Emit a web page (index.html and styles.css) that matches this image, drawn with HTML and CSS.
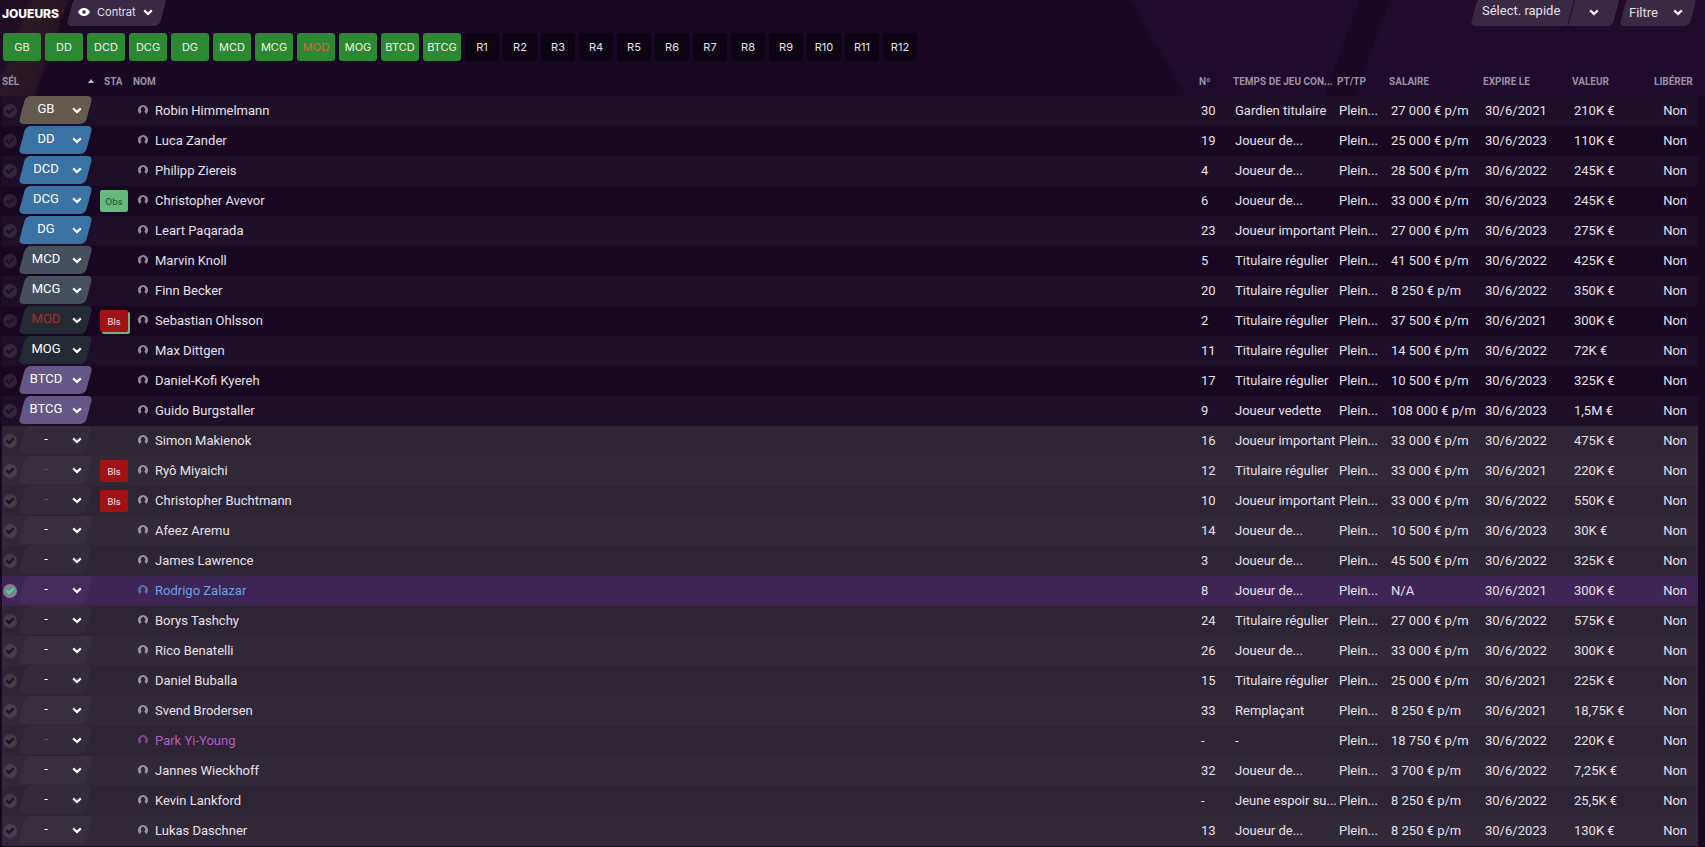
FILE: index.html
```html
<!DOCTYPE html>
<html lang="fr">
<head>
    <meta charset="UTF-8">
    <meta name="viewport" content="width=device-width, initial-scale=1.0">
    <title>Joueurs</title>
    <link rel="stylesheet" href="styles.css">
</head>
<body>
    <svg class="symbols" aria-hidden="true">
        <symbol id="chevron" viewBox="0 0 10 7">
            <path d="M1.2 1.4 L5 5 L8.8 1.4" fill="none" stroke="currentColor" stroke-width="2.2"/>
        </symbol>
        <symbol id="person" viewBox="0 0 10 10">
            <path fill="currentColor" d="M5 0a5 5 0 0 1 3.900 8.100L8 9.500C7.900 8 7.200 7 6.200 6.500a2.200 2.400 0 1 0-2.400 0C2.800 7 2.100 8 2 9.500L1.100 8.100A5 5 0 0 1 5 0z"/>
        </symbol>
    </svg>

    <header class="toolbar">
        <h1>Joueurs</h1>
        <button class="tab view">
            <svg class="eye" viewBox="0 0 12 8"><path fill="currentColor" fill-rule="evenodd" d="M6 0C9 0 11 2 12 4 11 6 9 8 6 8S1 6 0 4C1 2 3 0 6 0zM6 2.200a1.800 1.800 0 1 0 0 3.600 1.800 1.800 0 0 0 0-3.600z"/></svg>
            Contrat
            <svg class="chevron"><use href="#chevron"/></svg>
        </button>
        <div class="actions">
            <button class="tab quick">Sélect. rapide</button>
            <button class="tab more" aria-label="Options"><svg class="chevron"><use href="#chevron"/></svg></button>
            <button class="tab filter">Filtre <svg class="chevron"><use href="#chevron"/></svg></button>
        </div>
    </header>

    <nav class="chips" id="chips"></nav>

    <table class="players">
        <colgroup>
            <col class="c-sel"><col class="c-pos"><col class="c-sta"><col class="c-name">
            <col class="c-num"><col class="c-time"><col class="c-pt"><col class="c-wage">
            <col class="c-end"><col class="c-value"><col class="c-release">
        </colgroup>
        <thead>
            <tr>
                <th colspan="2"><span class="sort">SÉL</span></th>
                <th class="h-sta">STA</th>
                <th class="h-name">NOM</th>
                <th>Nº</th>
                <th>TEMPS DE JEU CON...</th>
                <th>PT/TP</th>
                <th>SALAIRE</th>
                <th>EXPIRE LE</th>
                <th>VALEUR</th>
                <th>LIBÉRER</th>
            </tr>
        </thead>
        <tbody id="players"></tbody>
    </table>

    <script>
        const positions = ["GB", "DD", "DCD", "DCG", "DG", "MCD", "MCG", "MOD", "MOG", "BTCD", "BTCG"];

        // position, status, name, number, playing time, wage, expiry year, value, extra class
        const players = [
            ["GB", "", "Robin Himmelmann", "30", "Gardien titulaire", "27 000 € p/m", 2021, "210K €"],
            ["DD", "", "Luca Zander", "19", "Joueur de...", "25 000 € p/m", 2023, "110K €"],
            ["DCD", "", "Philipp Ziereis", "4", "Joueur de...", "28 500 € p/m", 2022, "245K €"],
            ["DCG", "Obs", "Christopher Avevor", "6", "Joueur de...", "33 000 € p/m", 2023, "245K €"],
            ["DG", "", "Leart Paqarada", "23", "Joueur important", "27 000 € p/m", 2023, "275K €"],
            ["MCD", "", "Marvin Knoll", "5", "Titulaire régulier", "41 500 € p/m", 2022, "425K €"],
            ["MCG", "", "Finn Becker", "20", "Titulaire régulier", "8 250 € p/m", 2022, "350K €"],
            ["MOD", "Bls", "Sebastian Ohlsson", "2", "Titulaire régulier", "37 500 € p/m", 2021, "300K €", "out stacked"],
            ["MOG", "", "Max Dittgen", "11", "Titulaire régulier", "14 500 € p/m", 2022, "72K €"],
            ["BTCD", "", "Daniel-Kofi Kyereh", "17", "Titulaire régulier", "10 500 € p/m", 2023, "325K €"],
            ["BTCG", "", "Guido Burgstaller", "9", "Joueur vedette", "108 000 € p/m", 2023, "1,5M €"],
            ["-", "", "Simon Makienok", "16", "Joueur important", "33 000 € p/m", 2022, "475K €"],
            ["-", "Bls", "Ryô Miyaichi", "12", "Titulaire régulier", "33 000 € p/m", 2021, "220K €", "out"],
            ["-", "Bls", "Christopher Buchtmann", "10", "Joueur important", "33 000 € p/m", 2022, "550K €", "out"],
            ["-", "", "Afeez Aremu", "14", "Joueur de...", "10 500 € p/m", 2023, "30K €"],
            ["-", "", "James Lawrence", "3", "Joueur de...", "45 500 € p/m", 2022, "325K €"],
            ["-", "", "Rodrigo Zalazar", "8", "Joueur de...", "N/A", 2021, "300K €", "selected"],
            ["-", "", "Borys Tashchy", "24", "Titulaire régulier", "27 000 € p/m", 2022, "575K €"],
            ["-", "", "Rico Benatelli", "26", "Joueur de...", "33 000 € p/m", 2022, "300K €"],
            ["-", "", "Daniel Buballa", "15", "Titulaire régulier", "25 000 € p/m", 2021, "225K €"],
            ["-", "", "Svend Brodersen", "33", "Remplaçant", "8 250 € p/m", 2021, "18,75K €"],
            ["-", "", "Park Yi-Young", "-", "-", "18 750 € p/m", 2022, "220K €", "out youth"],
            ["-", "", "Jannes Wieckhoff", "32", "Joueur de...", "3 700 € p/m", 2022, "7,25K €"],
            ["-", "", "Kevin Lankford", "-", "Jeune espoir su...", "8 250 € p/m", 2022, "25,5K €"],
            ["-", "", "Lukas Daschner", "13", "Joueur de...", "8 250 € p/m", 2023, "130K €"]
        ];

        // Colour family of each position
        function groupOf(pos) {
            if (pos === "-") return "none";
            if (pos === "GB") return "keeper";
            if (pos[0] === "D") return "defence";
            if (pos.startsWith("MC")) return "midfield";
            if (pos.startsWith("MO")) return "attacking";
            return "striker";
        }

        function playerRow([pos, status, name, num, time, wage, year, value, extra = ""]) {
            const options = ["-", ...positions]
                .map(p => `<option${p === pos ? " selected" : ""}>${p}</option>`).join("");
            const badge = status ? `<span class="badge ${status.toLowerCase()}">${status}</span>` : "";
            return `<tr class="${pos === "-" ? "bench" : "starter"} ${extra}">
                <td><input type="checkbox" class="pick" aria-label="${name}"${extra === "selected" ? " checked" : ""}></td>
                <td><div class="pos ${groupOf(pos)}"><select aria-label="Poste de ${name}">${options}</select><svg class="chevron"><use href="#chevron"/></svg></div></td>
                <td>${badge}</td>
                <td class="name"><a href="#"><svg class="person"><use href="#person"/></svg>${name}</a></td>
                <td>${num}</td>
                <td>${time}</td>
                <td>Plein...</td>
                <td>${wage}</td>
                <td>30/6/${year}</td>
                <td>${value}</td>
                <td class="release">Non</td>
            </tr>`;
        }

        const chips = positions.map(p => `<button class="chip on${p === "MOD" ? " alert" : ""}">${p}</button>`);
        for (let i = 1; i <= 12; i++) {
            chips.push(`<button class="chip">R${i}</button>`);
        }

        document.getElementById("chips").innerHTML = chips.join("");
        document.getElementById("players").innerHTML = players.map(playerRow).join("");
    </script>
</body>
</html>
```

FILE: styles.css
```css
* {
    box-sizing: border-box;
}

/* Slanted stripes behind the header: brown on the left, violet on the right */
body {
    margin: 0;
    min-height: 100vh;
    overflow: hidden;
    background:
        linear-gradient(110deg, #1c0c22 0, #200f23 26px, #2b1925 32px, #291624 62px, transparent 67px) left top / 120px 96px no-repeat,
        linear-gradient(110deg, transparent 40px, #180823 43px, #180823 69px, transparent 72px) right top / 390px 96px no-repeat,
        linear-gradient(60deg, #180823 47px, #1e0b2e 50px) right top / 575px 96px no-repeat,
        #180823;
    color: #e6e0ea;
    font-family: Roboto, "Liberation Sans", sans-serif;
    font-size: 13px;
}

button,
select {
    border: 0;
    padding: 0;
    background: none;
    color: inherit;
    font: inherit;
}

.symbols {
    display: none;
}

.chevron {
    width: 10px;
    height: 7px;
    color: #fff;
}

/* Top bar */
.toolbar {
    display: flex;
    height: 26px;
    padding: 0 9px 0 2px;
    overflow: hidden;
}

h1 {
    width: 65px;
    margin: 0;
    font: 800 12px/28px Inter, sans-serif;
    text-transform: uppercase;
    color: #fff;
}

.tab {
    position: relative;
    z-index: 0;
    display: flex;
    align-items: center;
    height: 24px;
}

.tab::before {
    content: "";
    position: absolute;
    z-index: -1;
    inset: -2px 3px -2px;
    background: #392945;
    border-radius: 5px;
    transform: skewX(-15deg);
}

.view {
    gap: 7px;
    padding: 0 13px 0 11px;
    font: 11px Inter, sans-serif;
}

.eye {
    width: 12px;
    height: 8px;
    color: #fff;
}

.actions {
    display: flex;
    margin-left: auto;
}

.quick {
    width: 103px;
    padding: 0 0 3px 11px;
}

.quick::before {
    border-radius: 5px 0 0 5px;
}

.more {
    justify-content: center;
    width: 50px;
    margin-left: -5px;
}

.more::before {
    border-radius: 0 5px 5px 0;
}

.filter {
    justify-content: space-between;
    width: 76px;
    margin-left: 1px;
    padding: 0 13px 0 9px;
}

/* Position chips */
.chips {
    display: flex;
    gap: 4px;
    padding: 7px 3px 0;
}

.chip {
    width: 34px;
    height: 28px;
    border-radius: 3px;
    background: #0d0514;
    font: 11px Inter, sans-serif;
}

.chip.on {
    width: 38px;
    background: #2d8834;
    color: #e9f7e4;
}

.chip.alert {
    color: #cb6a45;
}

/* Player table */
.players {
    width: calc(100% - 9px);
    margin-left: 2px;
    table-layout: fixed;
    border-collapse: collapse;
}

.c-sel { width: 18px; }
.c-pos { width: 80px; }
.c-sta { width: 32px; }
.c-num { width: 34px; }
.c-time { width: 104px; }
.c-pt { width: 52px; }
.c-wage { width: 94px; }
.c-end { width: 89px; }
.c-value { width: 82px; }
.c-release { width: 44px; }

th {
    height: 35px;
    padding: 5px 0 0;
    color: #9c91a3;
    font-size: 10px;
    font-weight: 700;
    text-align: left;
    white-space: nowrap;
}

.h-sta {
    padding-left: 4px;
}

.h-name {
    padding-left: 1px;
}

.sort {
    display: flex;
    align-items: center;
    justify-content: space-between;
    padding-right: 6px;
}

.sort::after {
    content: "";
    border: 3px solid transparent;
    border-top: 0;
    border-bottom: 4px solid #c5bdca;
}

td {
    height: 30px;
    padding: 0 0 2px 2px;
    white-space: nowrap;
}

td:nth-child(-n+3) {
    padding: 0;
}

.starter:nth-child(odd) { background: #1d0f27; }
.starter:nth-child(even) { background: #170720; }
.bench:nth-child(even) { background: #2e2534; }
.bench:nth-child(odd) { background: #322938; }
.bench.selected { background: #3f2556; }

.pick {
    appearance: none;
    display: block;
    width: 14px;
    height: 14px;
    margin: 0 0 0 1px;
    border-radius: 50%;
    background: rgba(255, 255, 255, .1);
}

.pick::before {
    content: "";
    display: block;
    height: 14px;
    background: #1c1423;
    clip-path: polygon(19% 51%, 30% 40%, 43% 52%, 71% 24%, 82% 35%, 43% 75%);
}

.pick:checked {
    background: #857a91;
}

.pick:checked::before {
    background: #3ee08a;
}

.pos {
    position: relative;
    z-index: 0;
    display: flex;
    align-items: center;
    width: 71px;
    height: 28px;
    margin-bottom: 2px;
}

.pos::before {
    content: "";
    position: absolute;
    z-index: -1;
    inset: 0 2px;
    border-radius: 5px;
    transform: skewX(-15deg);
}

.keeper::before { background: #645a4e; }
.defence::before { background: #3b72a4; }
.midfield::before { background: #46505c; }
.attacking::before { background: #242a33; }
.striker::before { background: #655785; }
.none::before { background: rgba(255, 255, 255, .03); }

.pos select {
    appearance: none;
    width: 52px;
    height: 28px;
    padding-bottom: 4px;
    color: #fff;
    text-align: center;
    text-align-last: center;
}

.pos .chevron {
    margin-top: 1px;
}

.out select {
    color: #a82a2c;
}

.bench.out select {
    color: #a5384a;
}

.badge {
    display: block;
    width: 28px;
    height: 22px;
    border-radius: 2px;
    font: 500 9px/24px Inter, sans-serif;
    text-align: center;
}

.badge.obs {
    background: #66b97c;
    color: #2c5c3b;
}

.badge.bls {
    background: #a11215;
    color: #f3d5d5;
}

.stacked .badge {
    box-shadow: 2px 2px #7fae7b;
}

.players .name {
    padding-left: 6px;
}

.name a {
    display: flex;
    align-items: center;
    gap: 7px;
    color: inherit;
    text-decoration: none;
}

.person {
    width: 10px;
    height: 10px;
    opacity: .6;
}

.selected .name {
    color: #6ba2e0;
}

.youth .name {
    color: #ad5fc0;
}

.players .release {
    padding-right: 11px;
    text-align: right;
}
```
